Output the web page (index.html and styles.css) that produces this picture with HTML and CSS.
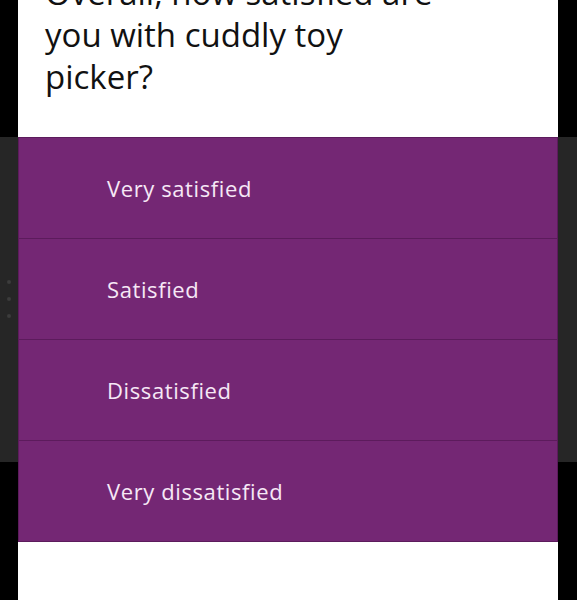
FILE: index.html
```html
<!DOCTYPE html>
<html lang="en">
<head>
<meta charset="utf-8">
<title>Survey</title>
<link rel="stylesheet" href="styles.css">
</head>
<body>
<div class="screen">
  <div class="app-dots" aria-hidden="true"><span></span><span></span><span></span></div>
  <div class="dialog">
    <h1 class="question">Overall, how satisfied are<br>you with cuddly toy<br>picker?</h1>
    <div class="options">
      <button class="option">Very satisfied</button>
      <button class="option">Satisfied</button>
      <button class="option">Dissatisfied</button>
      <button class="option">Very dissatisfied</button>
    </div>
  </div>
</div>
</body>
</html>
```
FILE: styles.css
```css
html, body {
  margin: 0;
  padding: 0;
  background: #000;
}
.screen {
  position: relative;
  width: 577px;
  height: 600px;
  overflow: hidden;
  background: linear-gradient(#000 0, #000 137px, #262626 137px, #262626 462px, #000 462px);
  font-family: "Open Sans", "Noto Sans", sans-serif;
}
.app-dots {
  position: absolute;
  left: 7px;
  top: 280px;
  display: flex;
  flex-direction: column;
  gap: 13px;
}
.app-dots span {
  width: 4px;
  height: 4px;
  border-radius: 50%;
  background: #3c3c3c;
}
.dialog {
  margin: 0 19px 0 18px;
  height: 600px;
  background: #fff;
  display: flex;
  flex-direction: column;
}
.question {
  margin: -28px 0 0 0;
  padding: 0 20px 39px 27px;
  font-size: 33px;
  line-height: 42px;
  font-weight: 400;
  color: #111;
  white-space: nowrap;
}
.options {
  display: flex;
  flex-direction: column;
}
.option {
  height: 101px;
  border: 1px solid #5c1b5c;
  border-top-width: 0;
  background: #742774;
  color: #f6e8f6;
  font-family: inherit;
  font-size: 22px;
  letter-spacing: 0.6px;
  text-align: left;
  padding: 0 0 0 88px;
  margin: 0;
}
.option:first-child {
  border-top-width: 1px;
  height: 102px;
}
```
